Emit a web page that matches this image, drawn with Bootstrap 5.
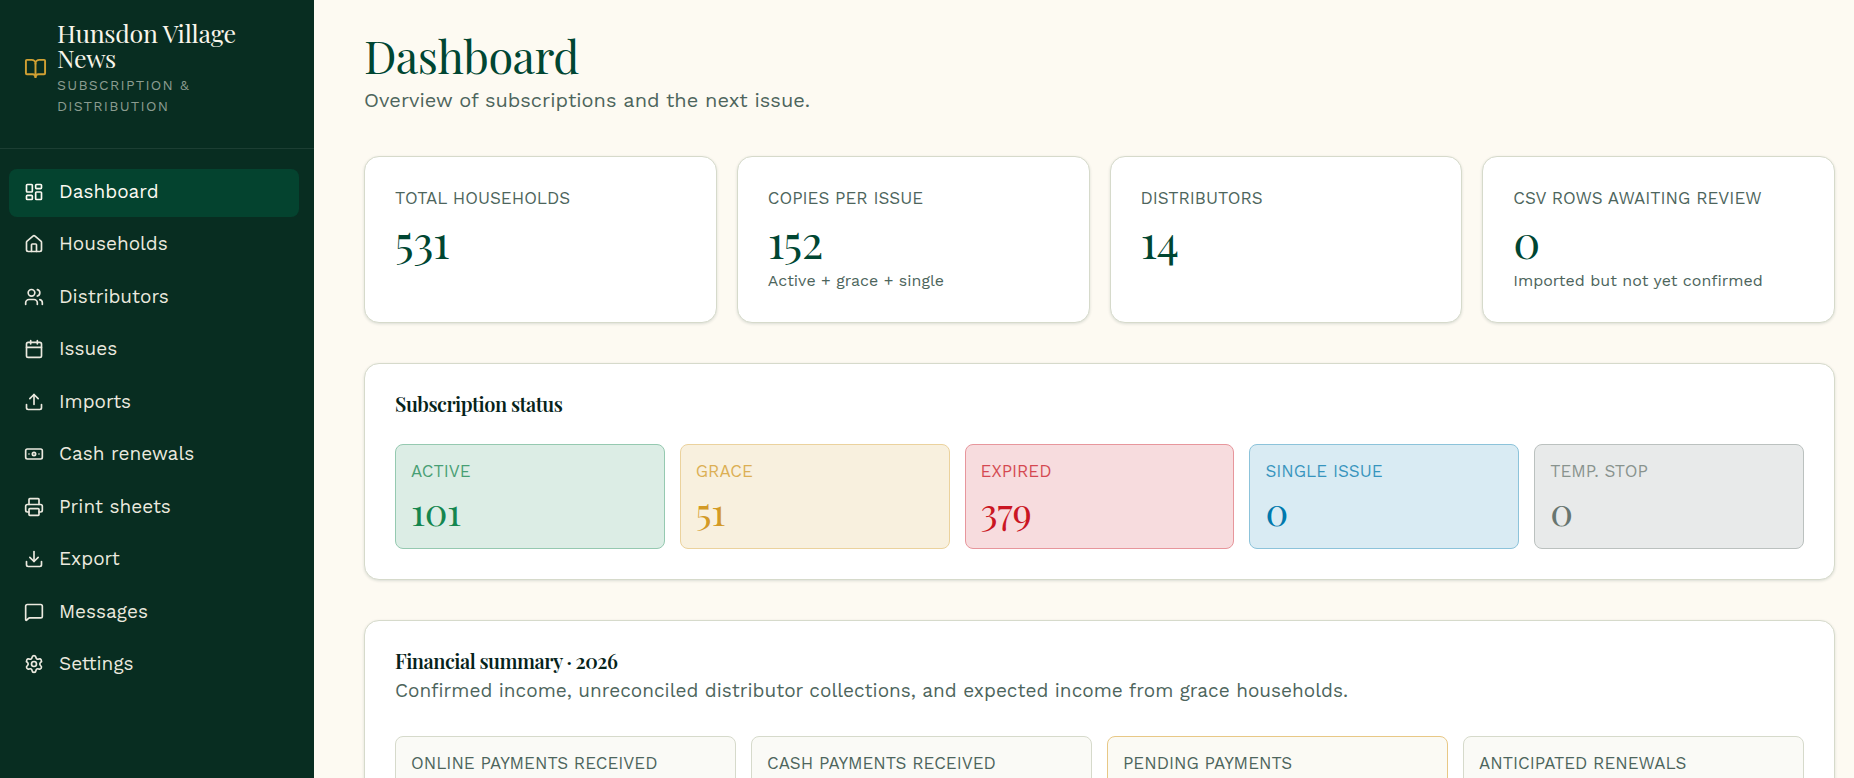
<!DOCTYPE html>
<html lang="en">
<head>
<meta charset="utf-8">
<meta name="viewport" content="width=device-width, initial-scale=1">
<title>Dashboard · Hunsdon Village News</title>
<link href="https://cdn.jsdelivr.net/npm/bootstrap@5.3.0/dist/css/bootstrap.min.css" rel="stylesheet">
<style>
  :root {
    --sans: "Work Sans", Inter, "Liberation Sans", sans-serif;
    --serif: "Playfair Display", "Liberation Serif", serif;
    --ink: #06231a;
    --green: #004632;
    --muted-ink: #4d655c;
    --line: #d6dacb;
  }
  body { font-family: var(--sans); background: #fdfaf2; color: var(--ink); }

  .side { width: 314px; background: #082d21; color: #ebe9df; }
  .brand-row { gap: 10px; padding: 20px 24px 31px; border-bottom: 1px solid #1c3e33; color: inherit; }
  .brand-row svg { width: 23px; height: 23px; color: #d0a033; }
  .brand-name { font: 25px/25px var(--serif); letter-spacing: -.01em; color: #f8f5ea; }
  .brand-tag { font-size: 14px; line-height: 21px; letter-spacing: .09em; color: #8b9c90; margin-top: 5px; }
  .side-menu { display: grid; grid-auto-rows: 1fr; gap: 5px; min-height: 520px; margin: 20px 15px 20px 9px; }
  .side-menu .nav-link { gap: 15px; padding: 0 15px 2px; border-radius: 8px; font-size: 19px; color: inherit; }
  .side-menu .nav-link:hover, .side-menu .nav-link.active { background: #04432f; color: #fdfaf2; }
  .side-menu svg { width: 20px; height: 20px; }
  .ico { fill: none; stroke: currentColor; stroke-width: 2; stroke-linecap: round; stroke-linejoin: round; }

  .page { padding: 30px 19px 30px 50px; }
  .page-title { font: 45px/50px var(--serif); letter-spacing: -.01em; margin-bottom: 6px; color: var(--green); }
  .page-lead { font-size: 20px; line-height: 28px; margin-bottom: 42px; color: var(--muted-ink); }

  .panel { background: #fff; border: 1px solid var(--line); border-radius: 15px; padding: 30px; box-shadow: 0 1px 3px rgba(6, 45, 33, .14); }
  .panel + .panel { margin-top: 40px; }
  .panel-title { font: 600 20px/20px var(--serif); letter-spacing: -.025em; margin-bottom: 30px; color: var(--ink); }
  .panel-title.with-note { margin-bottom: 5px; }
  .panel-note { font-size: 19px; line-height: 30px; margin-bottom: 30px; color: var(--muted-ink); }

  .stats { display: grid; grid-template-columns: repeat(4, 1fr); gap: 20px; margin-bottom: 40px; }
  .tiles { display: grid; grid-auto-flow: column; grid-auto-columns: 1fr; gap: 15px; }
  .tag { font-size: 17px; line-height: 22px; color: var(--muted-ink); }
  .figure-lg { font: 45px/45px var(--serif); letter-spacing: -.01em; margin: 9px 0 6px; color: var(--green); }
  .figure-md { font: 38px/36px var(--serif); letter-spacing: -.01em; margin-top: 11px; color: var(--tone); }
  .hint { font-size: 16px; line-height: 23px; color: var(--muted-ink); }

  .tile { border: 1px solid var(--line); border-radius: 8px; padding: 15px; min-height: 105px; background: #fafaf6; }
  .tile.toned { background: color-mix(in srgb, var(--tone) 15%, white); border-color: color-mix(in srgb, var(--tone) 45%, white); }
  .tile.toned .tag { color: var(--tone); opacity: .75; }
  .t-active { --tone: #14864f; }
  .t-grace { --tone: #d39a26; }
  .t-expired { --tone: #ca1623; }
  .t-single { --tone: #0079ad; }
  .t-stop { --tone: #687670; }
  .tile.pending { border-color: #e8c886; background: #fbfaf4; }
</style>
</head>
<body>
<div class="d-flex vh-100 overflow-hidden">
  <aside class="side flex-shrink-0">
    <a href="#" class="brand-row d-flex align-items-center text-decoration-none">
      <svg class="ico flex-shrink-0" viewBox="0 0 24 24" aria-hidden="true"><path d="M12 7v14"/><path d="M3 18a1 1 0 0 1-1-1V4a1 1 0 0 1 1-1h5a4 4 0 0 1 4 4 4 4 0 0 1 4-4h5a1 1 0 0 1 1 1v13a1 1 0 0 1-1 1h-6a3 3 0 0 0-3 3 3 3 0 0 0-3-3z"/></svg>
      <div>
        <div class="brand-name">Hunsdon Village News</div>
        <div class="brand-tag">SUBSCRIPTION &amp; DISTRIBUTION</div>
      </div>
    </a>
    <nav class="side-menu" aria-label="Main">
      <a class="nav-link active d-flex align-items-center" href="#" aria-current="page"><svg class="ico" viewBox="0 0 24 24"><rect width="7" height="9" x="3" y="3" rx="1"/><rect width="7" height="5" x="14" y="3" rx="1"/><rect width="7" height="9" x="14" y="12" rx="1"/><rect width="7" height="5" x="3" y="16" rx="1"/></svg>Dashboard</a>
      <a class="nav-link d-flex align-items-center" href="#"><svg class="ico" viewBox="0 0 24 24"><path d="M15 21v-8a1 1 0 0 0-1-1h-4a1 1 0 0 0-1 1v8"/><path d="M3 10a2 2 0 0 1 .709-1.528l7-5.999a2 2 0 0 1 2.582 0l7 5.999A2 2 0 0 1 21 10v9a2 2 0 0 1-2 2H5a2 2 0 0 1-2-2z"/></svg>Households</a>
      <a class="nav-link d-flex align-items-center" href="#"><svg class="ico" viewBox="0 0 24 24"><path d="M16 21v-2a4 4 0 0 0-4-4H6a4 4 0 0 0-4 4v2"/><circle cx="9" cy="7" r="4"/><path d="M22 21v-2a4 4 0 0 0-3-3.870"/><path d="M16 3.130a4 4 0 0 1 0 7.750"/></svg>Distributors</a>
      <a class="nav-link d-flex align-items-center" href="#"><svg class="ico" viewBox="0 0 24 24"><path d="M8 2v4"/><path d="M16 2v4"/><rect width="18" height="18" x="3" y="4" rx="2"/><path d="M3 10h18"/></svg>Issues</a>
      <a class="nav-link d-flex align-items-center" href="#"><svg class="ico" viewBox="0 0 24 24"><path d="M21 15v4a2 2 0 0 1-2 2H5a2 2 0 0 1-2-2v-4"/><path d="m17 8-5-5-5 5"/><path d="M12 3v12"/></svg>Imports</a>
      <a class="nav-link d-flex align-items-center" href="#"><svg class="ico" viewBox="0 0 24 24"><rect width="20" height="12" x="2" y="6" rx="2"/><circle cx="12" cy="12" r="2"/><path d="M6 12h.01M18 12h.01"/></svg>Cash renewals</a>
      <a class="nav-link d-flex align-items-center" href="#"><svg class="ico" viewBox="0 0 24 24"><path d="M6 18H4a2 2 0 0 1-2-2v-5a2 2 0 0 1 2-2h16a2 2 0 0 1 2 2v5a2 2 0 0 1-2 2h-2"/><path d="M6 9V3a1 1 0 0 1 1-1h10a1 1 0 0 1 1 1v6"/><rect x="6" y="14" width="12" height="8" rx="1"/></svg>Print sheets</a>
      <a class="nav-link d-flex align-items-center" href="#"><svg class="ico" viewBox="0 0 24 24"><path d="M21 15v4a2 2 0 0 1-2 2H5a2 2 0 0 1-2-2v-4"/><path d="m7 10 5 5 5-5"/><path d="M12 15V3"/></svg>Export</a>
      <a class="nav-link d-flex align-items-center" href="#"><svg class="ico" viewBox="0 0 24 24"><path d="M22 17a2 2 0 0 1-2 2H6.828a2 2 0 0 0-1.414.586l-2.202 2.202A.71.71 0 0 1 2 21.286V5a2 2 0 0 1 2-2h16a2 2 0 0 1 2 2z"/></svg>Messages</a>
      <a class="nav-link d-flex align-items-center" href="#"><svg class="ico" viewBox="0 0 24 24"><path d="M9.671 4.136a2.340 2.340 0 0 1 4.659 0 2.340 2.340 0 0 0 3.319 1.915 2.340 2.340 0 0 1 2.330 4.033 2.340 2.340 0 0 0 0 3.831 2.340 2.340 0 0 1-2.330 4.033 2.340 2.340 0 0 0-3.319 1.915 2.340 2.340 0 0 1-4.659 0 2.340 2.340 0 0 0-3.320-1.915 2.340 2.340 0 0 1-2.330-4.033 2.340 2.340 0 0 0 0-3.831A2.340 2.340 0 0 1 6.350 6.051a2.340 2.340 0 0 0 3.319-1.915"/><circle cx="12" cy="12" r="3"/></svg>Settings</a>
    </nav>
  </aside>

  <main class="page flex-grow-1 overflow-hidden">
    <h1 class="page-title">Dashboard</h1>
    <p class="page-lead">Overview of subscriptions and the next issue.</p>

    <div class="stats">
      <div class="panel m-0"><div class="tag">TOTAL HOUSEHOLDS</div><div class="figure-lg">531</div></div>
      <div class="panel m-0"><div class="tag">COPIES PER ISSUE</div><div class="figure-lg">152</div><div class="hint">Active + grace + single</div></div>
      <div class="panel m-0"><div class="tag">DISTRIBUTORS</div><div class="figure-lg">14</div></div>
      <div class="panel m-0"><div class="tag">CSV ROWS AWAITING REVIEW</div><div class="figure-lg">0</div><div class="hint">Imported but not yet confirmed</div></div>
    </div>

    <section class="panel">
      <h2 class="panel-title">Subscription status</h2>
      <div class="tiles">
        <div class="tile toned t-active"><div class="tag">ACTIVE</div><div class="figure-md">101</div></div>
        <div class="tile toned t-grace"><div class="tag">GRACE</div><div class="figure-md">51</div></div>
        <div class="tile toned t-expired"><div class="tag">EXPIRED</div><div class="figure-md">379</div></div>
        <div class="tile toned t-single"><div class="tag">SINGLE ISSUE</div><div class="figure-md">0</div></div>
        <div class="tile toned t-stop"><div class="tag">TEMP. STOP</div><div class="figure-md">0</div></div>
      </div>
    </section>

    <section class="panel">
      <h2 class="panel-title with-note">Financial summary · 2026</h2>
      <p class="panel-note">Confirmed income, unreconciled distributor collections, and expected income from grace households.</p>
      <div class="tiles">
        <div class="tile"><div class="tag">ONLINE PAYMENTS RECEIVED</div></div>
        <div class="tile"><div class="tag">CASH PAYMENTS RECEIVED</div></div>
        <div class="tile pending"><div class="tag">PENDING PAYMENTS</div></div>
        <div class="tile"><div class="tag">ANTICIPATED RENEWALS</div></div>
      </div>
    </section>
  </main>
</div>
<script src="https://cdn.jsdelivr.net/npm/bootstrap@5.3.0/dist/js/bootstrap.bundle.min.js"></script>
</body>
</html>
